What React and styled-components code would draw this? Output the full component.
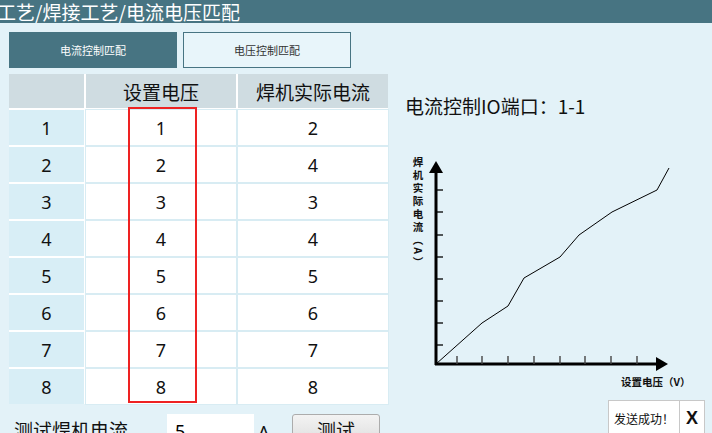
import React from 'react';
import styled, { createGlobalStyle } from 'styled-components';

const rows = [
  [1, 1, 2],
  [2, 2, 4],
  [3, 3, 3],
  [4, 4, 4],
  [5, 5, 5],
  [6, 6, 6],
  [7, 7, 7],
  [8, 8, 8],
];

const curve = [
  [31, 217], [77, 176], [103, 159], [119, 131], [155, 110],
  [174, 88], [207, 65], [252, 43], [264, 21],
];

const App = () => {
  return (
    <>
      <GlobalStyle />
      <TopBar>
        <span>工艺/焊接工艺/电流电压匹配</span>
      </TopBar>
      <Main>
        <LeftPane>
          <Tabs>
            <Tab active>电流控制匹配</Tab>
            <Tab>电压控制匹配</Tab>
          </Tabs>
          <TableWrap>
            <Grid>
              <HeadCell />
              <HeadCell>设置电压</HeadCell>
              <HeadCell>焊机实际电流</HeadCell>
              {rows.map(([idx, v, a]) => (
                <React.Fragment key={idx}>
                  <IndexCell>{idx}</IndexCell>
                  <Cell>{v}</Cell>
                  <Cell>{a}</Cell>
                </React.Fragment>
              ))}
            </Grid>
            <Highlight />
          </TableWrap>
          <TestRow>
            <TestLabel>测试焊机电流</TestLabel>
            <ValueInput defaultValue="5" />
            <Unit>A</Unit>
            <TestButton>测试</TestButton>
          </TestRow>
        </LeftPane>
        <RightPane>
          <PortTitle>电流控制IO端口：1-1</PortTitle>
          <Chart width="307" height="250" viewBox="0 0 307 250">
            <text
              x="13"
              y="10"
              fontSize="10.5"
              fontWeight="bold"
              letterSpacing="2.4"
              style={{ writingMode: 'vertical-rl' }}
              fill="#111"
            >
              焊机实际电流（A）
            </text>
            {/* y axis */}
            <line x1="31" y1="24" x2="31" y2="218" stroke="#000" strokeWidth="3" />
            <polygon points="31,14 24,26 38,26" fill="#000" />
            {[43, 65, 88, 110, 132, 154, 176, 198].map((y) => (
              <line key={y} x1="31" y1={y} x2="38" y2={y} stroke="#000" strokeWidth="1.3" />
            ))}
            {/* x axis */}
            <line x1="30" y1="217" x2="252" y2="217" stroke="#000" strokeWidth="3" />
            <polygon points="263,217 251,210 251,224" fill="#000" />
            {[52, 77, 103, 129, 155, 180, 206, 232].map((x) => (
              <line key={x} x1={x} y1="209" x2={x} y2="217" stroke="#444" strokeWidth="1.4" />
            ))}
            <polyline
              points={curve.map((p) => p.join(',')).join(' ')}
              fill="none"
              stroke="#000"
              strokeWidth="1"
            />
            <text x="216" y="239" fontSize="10.5" fontWeight="bold" fill="#111">
              设置电压（V）
            </text>
          </Chart>
        </RightPane>
      </Main>
      <Toast>
        <ToastText>发送成功！</ToastText>
        <ToastClose>X</ToastClose>
      </Toast>
    </>
  );
};

const GlobalStyle = createGlobalStyle`
  html, body {
    margin: 0;
    padding: 0;
    width: 712px;
    height: 433px;
    overflow: hidden;
    background: #e3f2f8;
    font-family: "Noto Sans", "Noto Sans CJK SC", sans-serif;
    color: #111;
  }
`;

const TopBar = styled.div`
  height: 23px;
  background: #477482;
  color: #fff;
  font-family: "Noto Sans CJK SC", sans-serif;
  font-size: 19px;
  line-height: 23px;
  white-space: nowrap;
  overflow: hidden;

  span {
    margin-left: -3px;
  }
`;

const Main = styled.div`
  display: flex;
  padding: 9px 0 0 9px;
`;

const LeftPane = styled.div`
  width: 380px;
  flex-shrink: 0;
`;

const Tabs = styled.div`
  display: flex;
  gap: 6px;
`;

const Tab = styled.div`
  width: 168px;
  height: 36px;
  box-sizing: border-box;
  display: flex;
  align-items: center;
  justify-content: center;
  font-family: "Noto Sans CJK SC", sans-serif;
  font-size: 11px;
  background: ${(p) => (p.active ? '#477482' : '#e8f5fa')};
  color: ${(p) => (p.active ? '#fff' : '#333')};
  border: 1px solid #477482;
`;

const TableWrap = styled.div`
  position: relative;
  margin-top: 6px;
  width: 379px;
`;

const Grid = styled.div`
  display: grid;
  grid-template-columns: 75px 150px 150px;
  grid-template-rows: 34px;
  grid-auto-rows: 35px;
  gap: 2px;
  background: #fff;
  font-size: 18px;
`;

const BaseCell = styled.div`
  display: flex;
  align-items: center;
  justify-content: center;
`;

const HeadCell = styled(BaseCell)`
  background: #cfdce1;
  font-family: "Noto Sans CJK SC", sans-serif;
  font-size: 19px;
`;

const IndexCell = styled(BaseCell)`
  background: #d8eef6;
`;

const Cell = styled(BaseCell)`
  background: #fff;
  box-shadow: 0 0 0 1px #d8ecf3;
`;

const Highlight = styled.div`
  position: absolute;
  left: 119px;
  top: 33px;
  width: 69px;
  height: 296px;
  box-sizing: border-box;
  border: 2px solid #ee2222;
  pointer-events: none;
`;

const TestRow = styled.div`
  display: flex;
  align-items: flex-start;
  margin-top: 10px;
`;

const TestLabel = styled.div`
  font-family: "Noto Sans CJK SC", sans-serif;
  font-size: 19px;
  line-height: 24px;
  margin: 4px 0 0 5px;
  width: 153px;
`;

const ValueInput = styled.input`
  width: 87px;
  height: 30px;
  box-sizing: border-box;
  border: none;
  background: #fff;
  font-family: "Noto Sans", sans-serif;
  font-size: 18px;
  padding: 4px 8px 0;
  outline: none;
`;

const Unit = styled.div`
  font-size: 18px;
  line-height: 24px;
  margin: 6px 0 0 4px;
  width: 34px;
`;

const TestButton = styled.button`
  width: 88px;
  height: 30px;
  border: 1px solid #acacac;
  border-radius: 3px;
  background: linear-gradient(#f3f3f3, #dedede);
  font-family: "Noto Sans CJK SC", sans-serif;
  font-size: 19px;
  color: #111;
  padding: 0;
`;

const RightPane = styled.div`
  flex: 1;
  padding-left: 16px;
`;

const PortTitle = styled.div`
  margin-top: 62px;
  font-family: "Noto Sans CJK SC", sans-serif;
  font-size: 19px;
  line-height: 24px;
`;

const Chart = styled.svg`
  display: block;
  margin-top: 29px;
  font-family: "Noto Sans CJK SC", sans-serif;
`;

const Toast = styled.div`
  position: absolute;
  left: 608px;
  top: 400px;
  display: flex;
  height: 34px;
  background: #fff;
  border: 1px solid #c8c8c8;
`;

const ToastText = styled.div`
  width: 70px;
  display: flex;
  align-items: center;
  justify-content: center;
  font-family: "Noto Sans CJK SC", sans-serif;
  font-size: 12px;
  border-right: 1px solid #c8c8c8;
`;

const ToastClose = styled.div`
  width: 24px;
  display: flex;
  align-items: center;
  justify-content: center;
  font-family: "Liberation Sans", sans-serif;
  font-weight: bold;
  font-size: 18px;
`;

export default App;
